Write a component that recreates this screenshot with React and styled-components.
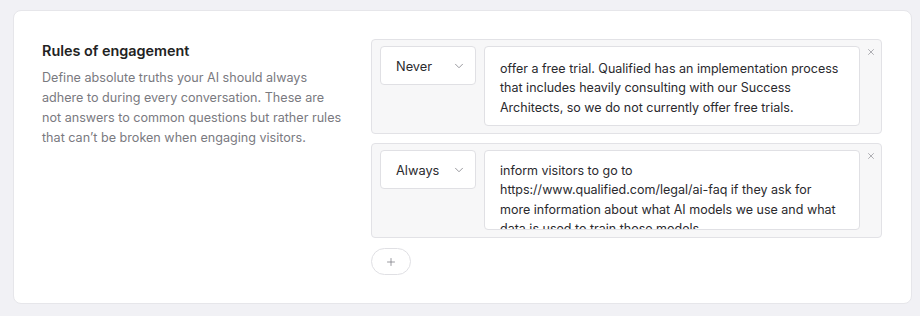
import React from 'react';
import styled, { createGlobalStyle } from 'styled-components';
import { ChevronDown, X, Plus } from 'lucide-react';

const GlobalStyle = createGlobalStyle`
  html, body {
    margin: 0;
    padding: 0;
    background: #f1f1f5;
    font-family: Inter, "Liberation Sans", sans-serif;
  }
`;

const Page = styled.div`
  padding: 10px 8px 13px 13px;
`;

const Card = styled.div`
  background: #fff;
  border: 1px solid #e6e6ea;
  border-radius: 8px;
  padding: 28px 29px 28px 28px;
  display: flex;
  gap: 26px;
  height: 294px;
  box-sizing: border-box;
`;

const Intro = styled.div`
  width: 303px;
  flex-shrink: 0;
`;

const Title = styled.h3`
  margin: 2px 0 0;
  font-size: 14.4px;
  font-weight: 600;
  color: #222;
  line-height: 20px;
`;

const Description = styled.p`
  margin: 7px 0 0;
  font-size: 12.6px;
  line-height: 20px;
  color: #7a7a7f;
`;

const Rules = styled.div`
  flex: 1;
  display: flex;
  flex-direction: column;
  gap: 9px;
`;

const RuleBox = styled.div`
  position: relative;
  display: flex;
  gap: 8px;
  background: #f7f7f8;
  border: 1px solid #e2e2e6;
  border-radius: 4px;
  padding: 6px 21px 7px 8px;
`;

const Select = styled.div`
  width: 96px;
  height: 39px;
  box-sizing: border-box;
  background: #fff;
  border: 1px solid #e0e0e4;
  border-radius: 4px;
  display: flex;
  align-items: center;
  justify-content: space-between;
  padding: 1px 9px 0 15px;
  font-size: 12.8px;
  color: #2a2a2e;
  flex-shrink: 0;
`;

const TextBox = styled.div`
  flex: 1;
  min-width: 0;
  height: 80px;
  box-sizing: border-box;
  background: #fff;
  border: 1px solid #e0e0e4;
  border-radius: 4px;
  padding: ${(p) => p.$top}px 8px 0 15px;
  font-size: 12.5px;
  line-height: 19.3px;
  color: #2a2a2e;
  white-space: pre-line;
  overflow: hidden;
`;

const Remove = styled.button`
  position: absolute;
  top: 7px;
  right: 5px;
  background: none;
  border: none;
  padding: 0;
  color: #8a8a90;
  display: flex;
  cursor: pointer;
`;

const AddButton = styled.button`
  width: 40px;
  height: 27px;
  margin-top: 1px;
  border: 1px solid #e0e0e4;
  border-radius: 14px;
  background: #fff;
  color: #7a7a80;
  display: flex;
  align-items: center;
  justify-content: center;
  padding: 0;
  cursor: pointer;
`;

const rules = [
  {
    kind: 'Never',
    top: 12,
    text: 'offer a free trial. Qualified has an implementation process\nthat includes heavily consulting with our Success\nArchitects, so we do not currently offer free trials.',
  },
  {
    kind: 'Always',
    top: 10,
    text: 'inform visitors to go to\nhttps://www.qualified.com/legal/ai-faq if they ask for\nmore information about what AI models we use and what\ndata is used to train those models.',
  },
];

export default function App() {
  return (
    <>
      <GlobalStyle />
      <Page>
        <Card>
          <Intro>
            <Title>Rules of engagement</Title>
            <Description>
              Define absolute truths your AI should always adhere to during every
              conversation. These are not answers to common questions but rather
              rules that can’t be broken when engaging visitors.
            </Description>
          </Intro>
          <Rules>
            {rules.map((r) => (
              <RuleBox key={r.kind}>
                <Select>
                  {r.kind}
                  <ChevronDown size={14} strokeWidth={1.5} color="#8a8a90" />
                </Select>
                <TextBox $top={r.top}>{r.text}</TextBox>
                <Remove>
                  <X size={10} strokeWidth={1.6} />
                </Remove>
              </RuleBox>
            ))}
            <AddButton>
              <Plus size={12} strokeWidth={1.5} />
            </AddButton>
          </Rules>
        </Card>
      </Page>
    </>
  );
}
